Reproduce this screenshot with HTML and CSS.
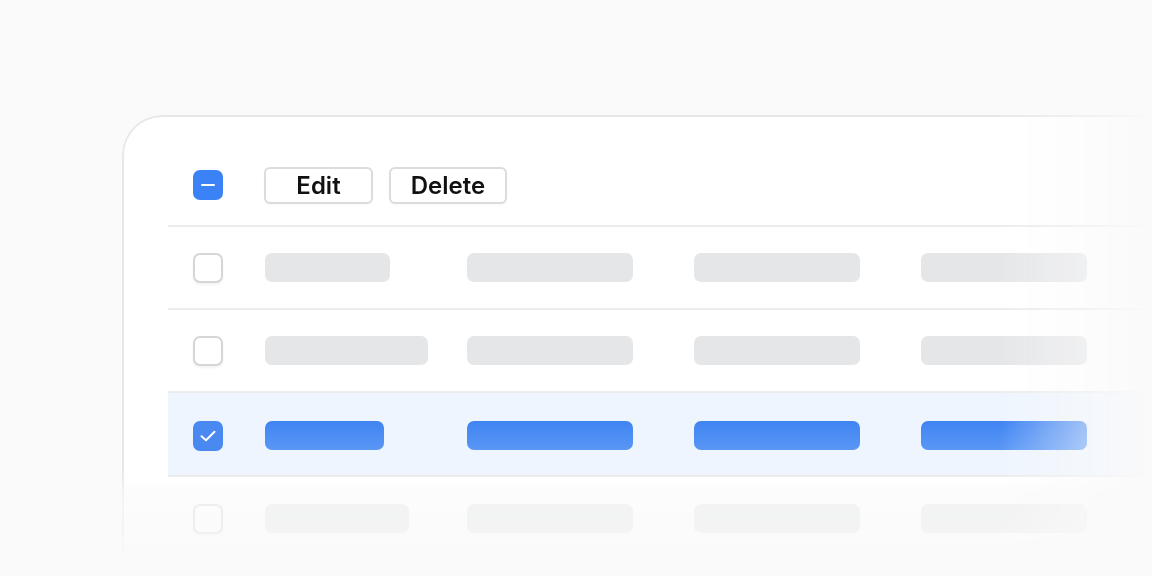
FILE: index.html
```html
<!DOCTYPE html>
<html>
<head>
<meta charset="utf-8">
<link rel="stylesheet" href="styles.css">
</head>
<body>
<div class="card">
  <div class="table">
    <div class="row head">
      <div class="cell"><span class="cb cb-mixed"><span class="dash"></span></span></div>
      <div class="actions">
        <button class="btn btn-edit">Edit</button>
        <button class="btn btn-delete">Delete</button>
      </div>
    </div>
    <div class="row">
      <div class="cell"><span class="cb"></span></div>
      <div class="cell"><span class="bar" style="width:125px"></span></div>
      <div class="cell"><span class="bar"></span></div>
      <div class="cell"><span class="bar"></span></div>
      <div class="cell"><span class="bar"></span></div>
    </div>
    <div class="row">
      <div class="cell"><span class="cb"></span></div>
      <div class="cell"><span class="bar" style="width:163px"></span></div>
      <div class="cell"><span class="bar"></span></div>
      <div class="cell"><span class="bar"></span></div>
      <div class="cell"><span class="bar"></span></div>
    </div>
    <div class="row selected">
      <div class="cell"><span class="cb cb-checked">
        <svg width="18" height="14" viewBox="0 0 18 14"><path d="M2.5 7.2 L7 11.2 L15.5 2.8" fill="none" stroke="#fff" stroke-width="2" stroke-linecap="round" stroke-linejoin="round"/></svg>
      </span></div>
      <div class="cell"><span class="bar bar-blue" style="width:119px"></span></div>
      <div class="cell"><span class="bar bar-blue"></span></div>
      <div class="cell"><span class="bar bar-blue"></span></div>
      <div class="cell"><span class="bar bar-blue"></span></div>
    </div>
    <div class="row last">
      <div class="cell"><span class="cb"></span></div>
      <div class="cell"><span class="bar" style="width:144px"></span></div>
      <div class="cell"><span class="bar"></span></div>
      <div class="cell"><span class="bar"></span></div>
      <div class="cell"><span class="bar"></span></div>
    </div>
  </div>
</div>
</body>
</html>
```

FILE: styles.css
```css
html, body {
  margin: 0;
  padding: 0;
  background: #fafafa;
  font-family: Inter, "Liberation Sans", sans-serif;
  overflow: hidden;
}

.card {
  position: relative;
  margin: 115px 0 0 122px;
  height: 445px;
  box-sizing: border-box;
  background: #ffffff;
  border: 2px solid #e8e8e8;
  border-right: none;
  border-bottom: none;
  border-radius: 40px 0 0 0;
  padding: 28px 0 0 44px;
  overflow: hidden;
  -webkit-mask-image:
    linear-gradient(to right, #000 0, #000 calc(100% - 152px), rgba(0,0,0,0.45) calc(100% - 60px), rgba(0,0,0,0) 100%),
    linear-gradient(to bottom, #000 0, #000 calc(100% - 84px), rgba(0,0,0,0.38) calc(100% - 68px), rgba(0,0,0,0.3) calc(100% - 30px), rgba(0,0,0,0) 100%);
  -webkit-mask-composite: source-in;
  mask-image:
    linear-gradient(to right, #000 0, #000 calc(100% - 152px), rgba(0,0,0,0.45) calc(100% - 60px), rgba(0,0,0,0) 100%),
    linear-gradient(to bottom, #000 0, #000 calc(100% - 84px), rgba(0,0,0,0.38) calc(100% - 68px), rgba(0,0,0,0.3) calc(100% - 30px), rgba(0,0,0,0) 100%);
  mask-composite: intersect;
}

.table {
  display: flex;
  flex-direction: column;
}

.row {
  display: grid;
  grid-template-columns: 72px 202px 227px 227px 227px;
  align-items: center;
  height: 83px;
  padding: 0 0 0 25px;
  box-sizing: border-box;
  border-bottom: 2px solid #ececed;
}

.row.head {
  display: flex;
  align-items: center;
  height: 82px;
}

.row.head .cell {
  width: 71px;
}

.row.selected {
  background: #eef5fe;
  height: 84px;
  padding-top: 3px;
}

.row.last {
  border-bottom: none;
}

.cell {
  display: flex;
  align-items: center;
}

.actions {
  display: flex;
  gap: 16px;
}

.btn {
  height: 37px;
  border: 2px solid #dcdcdc;
  border-radius: 6px;
  background: #ffffff;
  font-family: Inter, "Liberation Sans", sans-serif;
  font-size: 24px;
  font-weight: 600;
  color: #111111;
  padding: 0;
  line-height: 33px;
  box-shadow: 0 1px 2px rgba(0, 0, 0, 0.03);
}

.btn-edit { width: 109px; }
.btn-delete { width: 118px; }

.cb {
  width: 30px;
  height: 30px;
  box-sizing: border-box;
  border: 2px solid #d6d6d6;
  border-radius: 7px;
  background: #ffffff;
  box-shadow: 0 2px 3px rgba(0, 0, 0, 0.05);
  display: flex;
  align-items: center;
  justify-content: center;
}

.cb-mixed {
  background: #3b82f6;
  border-color: #3b82f6;
  box-shadow: none;
}

.dash {
  width: 14px;
  height: 2.5px;
  border-radius: 2px;
  background: #ffffff;
}

.cb-checked {
  background: #4a89f0;
  border-color: #4a89f0;
  box-shadow: none;
}

.bar {
  display: block;
  width: 166px;
  height: 29px;
  border-radius: 7px;
  background: #e5e6e8;
}

.bar-blue {
  background: linear-gradient(180deg, #3f84f2 0%, #5a97f5 100%);
}
```
